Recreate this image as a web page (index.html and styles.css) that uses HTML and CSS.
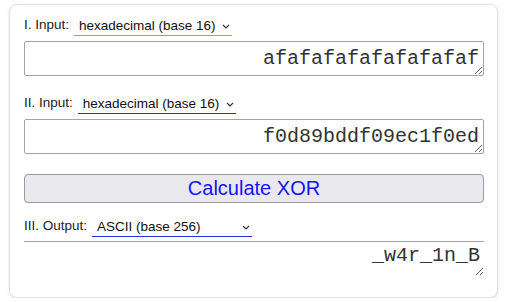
FILE: index.html
```html
<!DOCTYPE html>
<html lang="en">
<head>
    <meta charset="UTF-8">
    <meta name="viewport" content="width=device-width, initial-scale=1.0">
    <title>XOR Calculator</title>
    <link rel="stylesheet" href="styles.css">
</head>
<body>
    <main class="card">
        <div class="field-row">
            <label for="in1-base">I. Input:</label>
            <span class="select-wrap light">
                <select id="in1-base">
                    <option>hexadecimal (base 16)</option>
                </select>
                <svg class="chevron" width="8" height="5" viewBox="0 0 8 5"><path d="M1 1l3 3 3-3" fill="none" stroke="#333" stroke-width="1.2"/></svg>
            </span>
        </div>
        <textarea class="value" rows="1">afafafafafafafafaf</textarea>

        <div class="field-row second">
            <label for="in2-base">II. Input:</label>
            <span class="select-wrap">
                <select id="in2-base">
                    <option>hexadecimal (base 16)</option>
                </select>
                <svg class="chevron" width="8" height="5" viewBox="0 0 8 5"><path d="M1 1l3 3 3-3" fill="none" stroke="#333" stroke-width="1.2"/></svg>
            </span>
        </div>
        <textarea class="value" rows="1">f0d89bddf09ec1f0ed</textarea>

        <button class="calc">Calculate XOR</button>

        <div class="field-row third">
            <label for="out-base">III. Output:</label>
            <span class="select-wrap wide">
                <select id="out-base">
                    <option>ASCII (base 256)</option>
                </select>
                <svg class="chevron" width="8" height="5" viewBox="0 0 8 5"><path d="M1 1l3 3 3-3" fill="none" stroke="#333" stroke-width="1.2"/></svg>
            </span>
        </div>
        <textarea class="value output" rows="1" readonly>_w4r_1n_B</textarea>
    </main>
</body>
</html>
```

FILE: styles.css
```css
* {
    margin: 0;
    padding: 0;
    box-sizing: border-box;
}

body {
    font-family: 'Liberation Sans', Arial, sans-serif;
    background-color: #ffffff;
    color: #222;
}

.card {
    width: 489px;
    margin: 4px 0 0 9px;
    padding: 12px 13px 21px 14px;
    background: #fff;
    border: 1px solid #e2e2e2;
    border-radius: 8px;
    box-shadow: 0 1px 3px rgba(0, 0, 0, 0.12);
    display: flex;
    flex-direction: column;
}

.field-row {
    display: flex;
    align-items: flex-end;
    font-size: 13.5px;
    line-height: 16px;
    margin-bottom: 5px;
}

.field-row label {
    padding-bottom: 3px;
}

.field-row.second {
    margin-top: 19px;
}

.field-row.third {
    margin-top: 15px;
    margin-bottom: 4px;
}

.select-wrap {
    display: inline-flex;
    align-items: center;
    width: 158px;
    margin-left: 5px;
    padding: 1px 2px 1px 5px;
    border-bottom: 1px solid #2a2ae0;
}

.select-wrap.light {
    border-bottom-color: #8f8ff0;
}

.select-wrap.wide {
    width: 160px;
}

.select-wrap select {
    appearance: none;
    -webkit-appearance: none;
    flex: 1;
    border: none;
    background: transparent;
    font-family: 'Liberation Sans', Arial, sans-serif;
    font-size: 13.5px;
    line-height: 16px;
    color: #111;
    outline: none;
}

.chevron {
    flex: none;
    margin-left: 4px;
}

.value {
    width: 100%;
    height: 35px;
    padding: 5px 4px;
    font-family: 'Liberation Mono', 'Courier New', monospace;
    font-size: 20px;
    line-height: 23px;
    text-align: right;
    color: #333;
    border: 1px solid #a3a3a3;
    border-radius: 2px;
    overflow: hidden;
}

.value.output {
    border: none;
    border-top: 1px solid #a3a3a3;
    border-radius: 0;
    padding-top: 2px;
}

.calc {
    margin-top: 20px;
    height: 29px;
    font-family: 'Liberation Sans', Arial, sans-serif;
    font-size: 20px;
    color: #1515f0;
    background: #e9e9ed;
    border: 1px solid #9a9aa2;
    border-radius: 4px;
}
```
